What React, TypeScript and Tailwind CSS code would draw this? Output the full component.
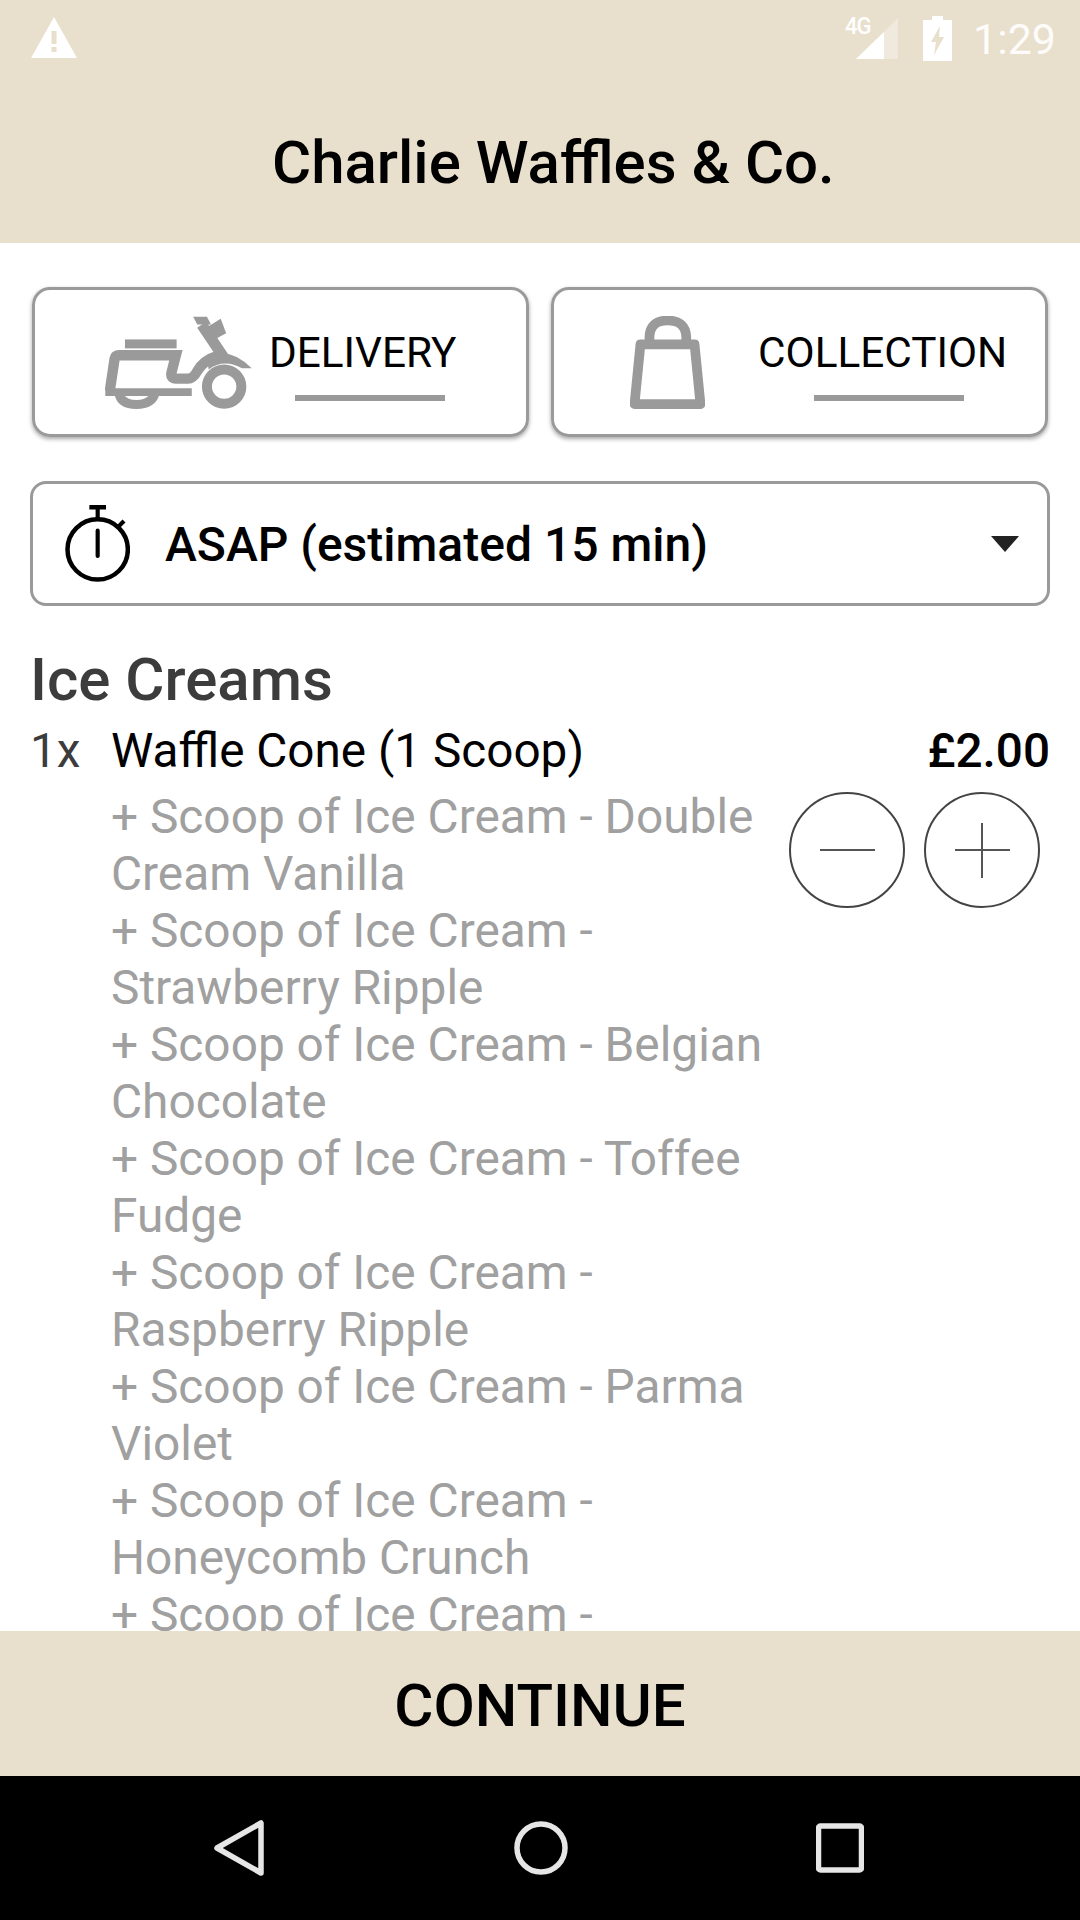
const extras = [
  'Double Cream Vanilla',
  'Strawberry Ripple',
  'Belgian Chocolate',
  'Toffee Fudge',
  'Raspberry Ripple',
  'Parma Violet',
  'Honeycomb Crunch',
];

const Scooter = () => (
  <svg width="147" height="93" viewBox="305 140 425 270" className="shrink-0">
    <rect x="362" y="208" width="150" height="26" fill="#9a9a9a" />
    <path d="M318 358 L332 264 Q334 254 345 254 H510 L497 305 Q494 322 510 322 H545 Q560 322 572 300 Q590 268 630 256" fill="none" stroke="#9a9a9a" strokeWidth="30" />
    <path d="M305 350 H556 V372 H305 Z" fill="#9a9a9a" />
    <path d="M585 165 L650 262" fill="none" stroke="#9a9a9a" strokeWidth="32" />
    <path d="M560 142 H600 L612 165 H572 Z" fill="#9a9a9a" />
    <path d="M605 170 L640 148 L656 190 L626 206 Z" fill="#9a9a9a" />
    <path d="M600 262 Q665 225 730 292 L702 292 Q650 262 605 295 Z" fill="#9a9a9a" />
    <circle cx="650" cy="345" r="50" fill="#fff" stroke="#9a9a9a" strokeWidth="29" />
    <path d="M332 368 Q340 410 395 410 Q450 410 462 368 H435 Q420 384 395 384 Q370 384 358 368 Z" fill="#9a9a9a" />
  </svg>
);

const Bag = () => (
  <svg width="75" height="93" viewBox="262 140 216 268" className="shrink-0">
    <path d="M292 222 H448 L465 394 H275 Z" fill="none" stroke="#9a9a9a" strokeWidth="28" strokeLinejoin="round" />
    <path d="M318 232 V200 Q320 153 370 153 Q422 153 424 200 V232" fill="none" stroke="#9a9a9a" strokeWidth="28" />
  </svg>
);

const Stopwatch = () => (
  <svg width="65" height="77" viewBox="188 708 187 222" className="shrink-0">
    <circle cx="282" cy="836" r="87" fill="none" stroke="#000" strokeWidth="13" />
    <rect x="258" y="708" width="48" height="13" fill="#000" />
    <rect x="276" y="712" width="12" height="36" fill="#000" />
    <path d="M338 774 L358 754" stroke="#000" strokeWidth="12" />
    <path d="M282 782 V855" stroke="#000" strokeWidth="12" strokeLinecap="round" />
  </svg>
);

export default function App() {
  return (
    <div className="w-[1080px] h-[1920px] flex flex-col bg-white overflow-hidden font-['Roboto',sans-serif] text-black">
      <header className="h-[243px] shrink-0 bg-[#e8dfcc] flex flex-col">
        <div className="h-[78px] flex items-center pl-[25px] pr-[24px]">
          <svg width="46" height="41" viewBox="0 0 46 41" className="mt-[-3px] ml-[6px]">
            <path d="M23 0 L46 41 H0 Z" fill="#fff" />
            <rect x="20.5" y="14" width="5" height="13" fill="#e8dfcc" />
            <rect x="20.5" y="30" width="5" height="5" fill="#e8dfcc" />
          </svg>
          <div className="ml-auto flex items-center">
            <div className="relative w-[51px] h-[42px]">
              <svg width="42" height="41" viewBox="0 0 42 41" className="absolute right-0 top-0">
                <path d="M42 0 V41 H0 Z" fill="#fff" fillOpacity="0.35" />
                <path d="M28 14 V41 H0 Z" fill="#fff" />
              </svg>
              <span className="absolute left-[-2px] top-[-3px] text-[22px] leading-[22px] font-medium text-white tracking-[-1px] scale-y-110">4G</span>
            </div>
            <svg width="29" height="45" viewBox="0 0 29 45" className="ml-[25px] -mt-[2px]">
              <path d="M9 0 H20 V4 H29 V45 H0 V4 H9 Z" fill="#fff" />
              <path d="M17 10 L8 26 H13 L11 39 L21 21 H16 Z" fill="#e8dfcc" />
            </svg>
            <span className="ml-[21px] text-[43px] leading-none text-white/90">1:29</span>
          </div>
        </div>
        <h1 className="mt-[52px] ml-[272px] text-[60px] leading-[66px] font-medium text-black">Charlie Waffles &amp; Co.</h1>
      </header>

      <main className="flex-1 min-h-0 overflow-hidden px-[30px]">
        <div className="mt-[44px] pl-[2px] pr-[2px] flex gap-[22px]">
          <div className="w-[497px] h-[150px] pl-[70px] flex items-center gap-[17px] border-[3px] border-[#9a9a9a] rounded-[18px] shadow-[0_2px_4px_rgba(0,0,0,0.35)]">
            <Scooter />
            <div className="flex flex-col items-start pt-[5px]">
              <span className="text-[42.3px] leading-[50px] text-black">DELIVERY</span>
              <span className="ml-[26px] mt-[17px] w-[150px] h-[6px] bg-[#9a9a9a]" />
            </div>
          </div>
          <div className="w-[497px] h-[150px] pl-[76px] flex items-center gap-[53px] border-[3px] border-[#9a9a9a] rounded-[18px] shadow-[0_2px_4px_rgba(0,0,0,0.35)]">
            <Bag />
            <div className="flex flex-col items-start pt-[5px]">
              <span className="text-[42.3px] leading-[50px] text-black">COLLECTION</span>
              <span className="ml-[56px] mt-[17px] w-[150px] h-[6px] bg-[#9a9a9a]" />
            </div>
          </div>
        </div>

        <div className="mt-[44px] h-[125px] flex items-center border-[3px] border-[#9a9a9a] rounded-[16px] pl-[32px] pr-[28px]">
          <Stopwatch />
          <span className="ml-[35px] mt-[3px] text-[48px] leading-[54px] font-medium">ASAP (estimated 15 min)</span>
          <svg width="28" height="16" viewBox="0 0 28 16" className="ml-auto">
            <path d="M0 0 H28 L14 16 Z" fill="#222" />
          </svg>
        </div>

        <h2 className="mt-[39px] text-[60px] leading-[70px] font-medium text-[#3c3c3c]">Ice Creams</h2>

        <div className="mt-[8px] flex">
          <span className="w-[81px] shrink-0 text-[47.7px] leading-[57px] text-[#3c3c3c]">1x</span>
          <div className="flex-1 min-w-0">
            <div className="flex justify-between">
              <span className="text-[47.7px] leading-[57px]">Waffle Cone (1 Scoop)</span>
              <span className="text-[47.7px] leading-[57px] font-medium">£2.00</span>
            </div>
            <div className="flex mt-[9px]">
              <div className="w-[660px] shrink-0 text-[47.8px] leading-[57px] text-[#a0a0a0]">
                {extras.map((name) => (
                  <div key={name}>+ Scoop of Ice Cream - {name}</div>
                ))}
                <div>+ Scoop of Ice Cream -</div>
              </div>
              <div className="ml-[18px] mt-[3px] flex gap-[19px] items-start">
                <div className="w-[116px] h-[116px] rounded-full border-2 border-[#444] flex items-center justify-center">
                  <span className="w-[55px] h-[2px] bg-[#555]" />
                </div>
                <div className="relative w-[116px] h-[116px] rounded-full border-2 border-[#444] flex items-center justify-center">
                  <span className="w-[55px] h-[2px] bg-[#555]" />
                  <span className="absolute w-[2px] h-[55px] bg-[#555]" />
                </div>
              </div>
            </div>
          </div>
        </div>
      </main>

      <div className="h-[145px] pt-[4px] shrink-0 bg-[#e8dfcc] flex items-center justify-center">
        <span className="text-[60px] leading-none font-medium text-black">CONTINUE</span>
      </div>

      <nav className="h-[144px] shrink-0 bg-black flex items-center justify-center">
        <svg width="50" height="56" viewBox="0 0 50 56">
          <path d="M47 3 V53 L3 28 Z" fill="none" stroke="#e6e6e6" strokeWidth="5.5" strokeLinejoin="round" />
        </svg>
        <svg width="54" height="54" viewBox="0 0 54 54" className="ml-[250px]">
          <circle cx="27" cy="27" r="24" fill="none" stroke="#e6e6e6" strokeWidth="5.5" />
        </svg>
        <svg width="48" height="50" viewBox="0 0 48 50" className="ml-[248px] mr-[3px]">
          <rect x="2.5" y="3" width="43" height="44" rx="2" fill="none" stroke="#e6e6e6" strokeWidth="5.5" />
        </svg>
      </nav>
    </div>
  );
}
